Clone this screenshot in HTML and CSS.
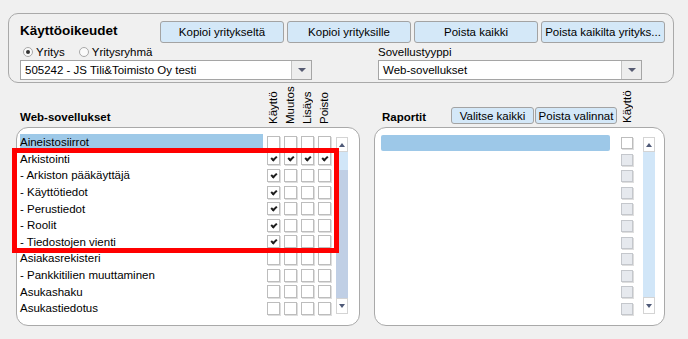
FILE: index.html
```html
<!DOCTYPE html>
<html lang="fi">
<head>
  <meta charset="UTF-8">
  <title>Käyttöoikeudet</title>
  <link rel="stylesheet" href="styles.css">
</head>
<body>
  <div class="top-panel">
    <div class="toolbar">
      <div class="title">Käyttöoikeudet</div>
      <button class="btn tool-btn">Kopioi yritykseltä</button>
      <button class="btn tool-btn">Kopioi yrityksille</button>
      <button class="btn tool-btn">Poista kaikki</button>
      <button class="btn tool-btn">Poista kaikilta yrityks...</button>
    </div>
    <div class="selectors">
      <div class="radios">
        <span class="radio checked"></span><span>Yritys</span>
        <span class="radio second"></span><span>Yritysryhmä</span>
      </div>
      <div class="field-label">Sovellustyyppi</div>
      <div class="select">
        <span class="select-value">505242 - JS Tili&amp;Toimisto Oy testi</span>
        <span class="select-arrow"></span>
      </div>
      <div class="select">
        <span class="select-value">Web-sovellukset</span>
        <span class="select-arrow"></span>
      </div>
    </div>
  </div>

  <div class="lower">
    <div class="panel-left">
      <div class="panel-head">
        <div class="head-title">Web-sovellukset</div>
        <div class="vheads">
          <span class="vhead">Käyttö</span>
          <span class="vhead">Muutos</span>
          <span class="vhead">Lisäys</span>
          <span class="vhead">Poisto</span>
        </div>
      </div>
      <div class="list-box">
        <div class="rows">
          <div class="row sel"><span class="row-label">Aineistosiirrot</span><span class="checks"><i class="cb"></i><i class="cb"></i><i class="cb"></i><i class="cb"></i></span></div>
          <div class="row"><span class="row-label">Arkistointi</span><span class="checks"><i class="cb on"></i><i class="cb on"></i><i class="cb on"></i><i class="cb on"></i></span></div>
          <div class="row"><span class="row-label">- Arkiston pääkäyttäjä</span><span class="checks"><i class="cb on"></i><i class="cb"></i><i class="cb"></i><i class="cb"></i></span></div>
          <div class="row"><span class="row-label">- Käyttötiedot</span><span class="checks"><i class="cb on"></i><i class="cb"></i><i class="cb"></i><i class="cb"></i></span></div>
          <div class="row"><span class="row-label">- Perustiedot</span><span class="checks"><i class="cb on"></i><i class="cb"></i><i class="cb"></i><i class="cb"></i></span></div>
          <div class="row"><span class="row-label">- Roolit</span><span class="checks"><i class="cb on"></i><i class="cb"></i><i class="cb"></i><i class="cb"></i></span></div>
          <div class="row"><span class="row-label">- Tiedostojen vienti</span><span class="checks"><i class="cb on"></i><i class="cb"></i><i class="cb"></i><i class="cb"></i></span></div>
          <div class="row"><span class="row-label">Asiakasrekisteri</span><span class="checks"><i class="cb"></i><i class="cb"></i><i class="cb"></i><i class="cb"></i></span></div>
          <div class="row"><span class="row-label">- Pankkitilien muuttaminen</span><span class="checks"><i class="cb"></i><i class="cb"></i><i class="cb"></i><i class="cb"></i></span></div>
          <div class="row"><span class="row-label">Asukashaku</span><span class="checks"><i class="cb"></i><i class="cb"></i><i class="cb"></i><i class="cb"></i></span></div>
          <div class="row"><span class="row-label">Asukastiedotus</span><span class="checks"><i class="cb"></i><i class="cb"></i><i class="cb"></i><i class="cb"></i></span></div>
        </div>
        <div class="scrollbar sb-left">
          <span class="sb-btn up"></span>
          <span class="sb-track short"></span>
          <span class="sb-thumb"></span>
          <span class="sb-btn down"></span>
        </div>
        <div class="red-frame"></div>
      </div>
    </div>

    <div class="panel-right">
      <div class="panel-head">
        <div class="head-title reports">Raportit</div>
        <button class="btn small-btn">Valitse kaikki</button>
        <button class="btn small-btn narrow">Poista valinnat</button>
        <span class="vhead single">Käyttö</span>
      </div>
      <div class="list-box right-box">
        <div class="report-list">
          <div class="report-item sel"></div>
        </div>
        <div class="rcol">
          <i class="cb small"></i><i class="cb small off"></i><i class="cb small off"></i><i class="cb small off"></i>
          <i class="cb small off"></i><i class="cb small off"></i><i class="cb small off"></i><i class="cb small off"></i>
          <i class="cb small off"></i><i class="cb small off"></i><i class="cb small off"></i>
        </div>
        <div class="scrollbar sb-right">
          <span class="sb-btn up"></span>
          <span class="sb-track long"></span>
          <span class="sb-btn down tall"></span>
        </div>
      </div>
    </div>
  </div>
</body>
</html>
```

FILE: styles.css
```css
body {
  margin: 0;
  background-color: #f0f0f0;
  font-family: "Liberation Sans", Arial, sans-serif;
  font-size: 11.5px;
  color: #000;
}

.top-panel {
  box-sizing: border-box;
  width: 666px;
  height: 70px;
  margin: 13px 0 0 8px;
  padding: 7px 0 0 11px;
  border: 1px solid #a9a9a9;
  border-radius: 10px;
}

.toolbar {
  display: flex;
  align-items: center;
  height: 22px;
}

.title {
  width: 140px;
  font-size: 13.5px;
  font-weight: bold;
  padding-bottom: 3px;
}

.btn {
  box-sizing: border-box;
  padding: 0;
  font: inherit;
  color: #000;
  background-color: #d4e8f8;
  border: 1px solid #a3a3a3;
  border-radius: 3px;
  white-space: nowrap;
}

.tool-btn {
  width: 124px;
  height: 22px;
  margin-right: 3px;
}

.selectors {
  display: grid;
  grid-template-columns: 292px 264px;
  grid-template-rows: 16px 20px;
  column-gap: 66px;
  margin-top: 1px;
}

.radios {
  display: flex;
  align-items: center;
  padding-left: 3px;
}

.radio {
  box-sizing: border-box;
  width: 10px;
  height: 10px;
  margin-right: 3px;
  border: 1px solid #a8a8a8;
  border-radius: 50%;
  background-color: #fafafa;
  display: flex;
  align-items: center;
  justify-content: center;
}

.radio.second {
  margin-left: 14px;
}

.radio.checked::after {
  content: "";
  width: 4px;
  height: 4px;
  border-radius: 50%;
  background-color: #333;
}

.field-label {
  line-height: 16px;
}

.select {
  box-sizing: border-box;
  display: flex;
  height: 20px;
  border: 1px solid #a5a5a5;
  background-color: #fff;
}

.select-value {
  flex: 1;
  padding-left: 4px;
  line-height: 18px;
}

.select-arrow {
  width: 19px;
  border-left: 1px solid #c3c3c3;
  background-color: #ededed;
  display: flex;
  align-items: center;
  justify-content: center;
}

.select-arrow::after {
  content: "";
  border-left: 4px solid transparent;
  border-right: 4px solid transparent;
  border-top: 4px solid #565b72;
}

.lower {
  display: flex;
  gap: 14px;
  margin: 2px 0 0 16px;
}

.panel-left {
  width: 344px;
}

.panel-right {
  width: 291px;
}

.panel-head {
  box-sizing: border-box;
  display: flex;
  align-items: flex-end;
  height: 42px;
  padding-bottom: 3px;
}

.head-title {
  box-sizing: border-box;
  width: 251px;
  padding-left: 4px;
  font-weight: bold;
  line-height: 14px;
}

.head-title.reports {
  width: 77px;
  padding-left: 8px;
}

.vheads {
  display: flex;
  gap: 4px;
}

.vhead {
  width: 13px;
  height: 38px;
  line-height: 13px;
  writing-mode: vertical-rl;
  transform: rotate(180deg);
  white-space: nowrap;
}

.vhead.single {
  margin-left: 4px;
  margin-bottom: 1px;
}

.small-btn {
  width: 83px;
  height: 17px;
}

.small-btn.narrow {
  width: 82px;
  margin-left: 1px;
}

.list-box {
  position: relative;
  box-sizing: border-box;
  display: flex;
  align-items: flex-start;
  height: 199px;
  padding: 6px 0 0 3px;
  background-color: #fff;
  border: 1px solid #a9a9a9;
  border-radius: 12px;
}

.rows {
  width: 311px;
}

.row {
  display: flex;
  align-items: center;
  height: 16.6px;
}

.row-label {
  width: 243px;
  line-height: 16px;
  white-space: nowrap;
}

.row.sel .row-label {
  background-color: #9ec9e8;
}

.checks {
  display: flex;
  gap: 4px;
  margin-left: 4px;
}

.cb {
  position: relative;
  box-sizing: border-box;
  display: block;
  width: 13px;
  height: 13px;
  background-color: #fff;
  border: 1px solid #bdbdbd;
  box-shadow: 1px 1px 0 #dedede;
}

.cb.on::after {
  content: "";
  position: absolute;
  left: 4px;
  top: 2px;
  width: 2px;
  height: 4px;
  border-right: 2px solid #1e1e1e;
  border-bottom: 2px solid #1e1e1e;
  transform: rotate(45deg);
}

.cb.small {
  width: 12px;
  height: 12px;
  margin: 2px 0 2.6px;
}

.cb.small.off {
  background-color: #e6e9ee;
  border-color: #c4c7cc;
}

.scrollbar {
  display: flex;
  flex-direction: column;
  width: 12px;
}

.sb-left {
  margin: 3px 0 0 5px;
}

.sb-right {
  margin: 2px 0 0 10px;
}

.sb-btn {
  box-sizing: border-box;
  height: 15px;
  background-color: #fff;
  border: 1px solid #d4d4d4;
  display: flex;
  align-items: center;
  justify-content: center;
}

.sb-btn.up::after {
  content: "";
  border-left: 3.5px solid transparent;
  border-right: 3.5px solid transparent;
  border-bottom: 4px solid #4f5a78;
}

.sb-btn.down {
  height: 16px;
}

.sb-btn.down.tall {
  height: 17px;
}

.sb-btn.down::after {
  content: "";
  border-left: 3.5px solid transparent;
  border-right: 3.5px solid transparent;
  border-top: 4px solid #4f5a78;
}

.sb-track {
  background-color: #d1e6f8;
}

.sb-track.short {
  height: 18px;
}

.sb-track.long {
  height: 145px;
}

.sb-thumb {
  height: 128px;
  background-color: #c0cfe5;
}

.red-frame {
  position: absolute;
  left: -5px;
  top: 20px;
  box-sizing: border-box;
  width: 327px;
  height: 105px;
  border: 5px solid #ff0000;
}

.right-box {
  padding: 7px 0 0 6px;
}

.report-list {
  width: 229px;
}

.report-item {
  height: 16px;
}

.report-item.sel {
  background-color: #9dc8e8;
  border-radius: 2px;
}

.rcol {
  display: flex;
  flex-direction: column;
  margin-left: 11px;
}
```
